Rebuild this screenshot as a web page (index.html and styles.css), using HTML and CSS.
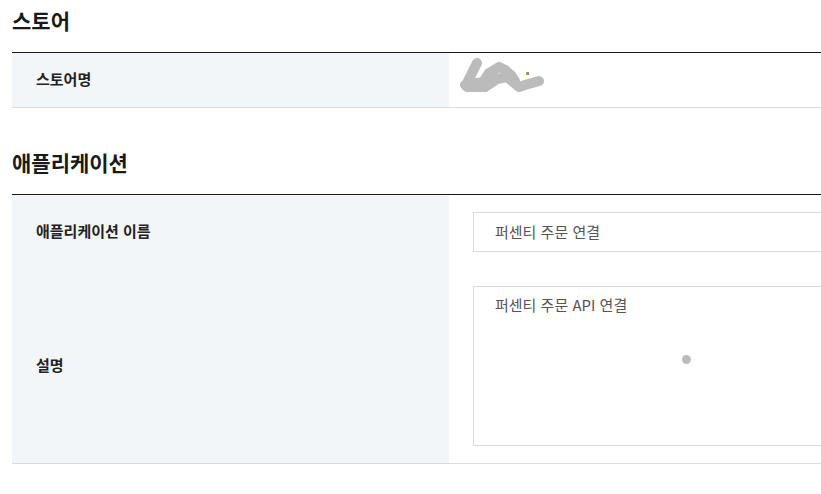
FILE: index.html
```html
<!DOCTYPE html>
<html lang="ko">
<head>
<meta charset="utf-8">
<title>스토어</title>
<link rel="stylesheet" href="styles.css">
</head>
<body>
<div class="page">
  <section class="section first">
    <h2 class="section-title">스토어</h2>
    <div class="table">
      <div class="row bordered store-row">
        <div class="label">스토어명</div>
        <div class="value">
          <svg class="scribble" width="90" height="42" viewBox="0 0 90 42">
            <g fill="none" stroke="#bbbbbb" stroke-width="10" stroke-linecap="round" stroke-linejoin="round">
              <path d="M22 8 L12 28"/>
              <path d="M10 30 L28 27 L34 18 L44 12 L50 15"/>
              <path d="M12 32 L30 32 L42 24 L52 22 L64 32 L70 30 L84 26"/>
              <path d="M50 15 L56 20 L60 26"/>
            </g>
            <rect x="71" y="17" width="1" height="3" fill="#c9a15a"/>
            <rect x="72" y="17" width="1" height="3" fill="#7a8fd0"/>
            <rect x="73" y="17" width="1" height="3" fill="#b07a6a"/>
          </svg>
        </div>
      </div>
    </div>
  </section>
  <section class="section second">
    <h2 class="section-title">애플리케이션</h2>
    <div class="table">
      <div class="row">
        <div class="label">애플리케이션 이름</div>
        <div class="value pad">
          <div class="field input">퍼센티 주문 연결</div>
        </div>
      </div>
      <div class="row bordered">
        <div class="label">설명</div>
        <div class="value pad">
          <div class="field textarea">퍼센티 주문 API 연결</div>
        </div>
      </div>
    </div>
  </section>
  <span class="dot"></span>
</div>
</body>
</html>
```
FILE: styles.css
```css
html, body {
  margin: 0;
  padding: 0;
  background: #ffffff;
  overflow: hidden;
}
body {
  font-family: "Noto Sans CJK KR", "Noto Sans", sans-serif;
  color: #222;
}
.page {
  position: relative;
  width: 900px;
  padding: 6px 0 0 12px;
}
.section.second {
  padding-top: 40px;
}
.section-title {
  margin: 0 0 18px 0;
  font-size: 21px;
  line-height: 28px;
  font-weight: 700;
  color: #1a1a1a;
}
.table {
  border-top: 1px solid #1a1a1a;
}
.row {
  display: flex;
}
.row.bordered {
  border-bottom: 1px solid #dcdcdf;
}
.store-row {
  height: 54px;
}
.label {
  box-sizing: border-box;
  width: 437px;
  flex: none;
  background: #f3f6f9;
  padding: 0 0 3px 24px;
  display: flex;
  align-items: center;
  font-size: 15px;
  font-weight: 700;
  color: #222;
}
.value {
  flex: 1;
  position: relative;
  display: flex;
  align-items: center;
}
.value.pad {
  padding: 17px 0 17px 24px;
}
.scribble {
  margin-left: 6px;
  margin-top: -8px;
}
.field {
  box-sizing: border-box;
  width: 100%;
  border: 1px solid #dcdcdc;
  background: #fff;
  padding-left: 21px;
  font-size: 15px;
  color: #555;
}
.input {
  height: 40px;
  display: flex;
  align-items: center;
  padding-bottom: 1px;
}
.textarea {
  height: 160px;
  padding-top: 7px;
  align-self: flex-start;
}
.dot {
  position: absolute;
  left: 682px;
  top: 355px;
  width: 9px;
  height: 9px;
  border-radius: 50%;
  background: #bbbbbb;
}
```
